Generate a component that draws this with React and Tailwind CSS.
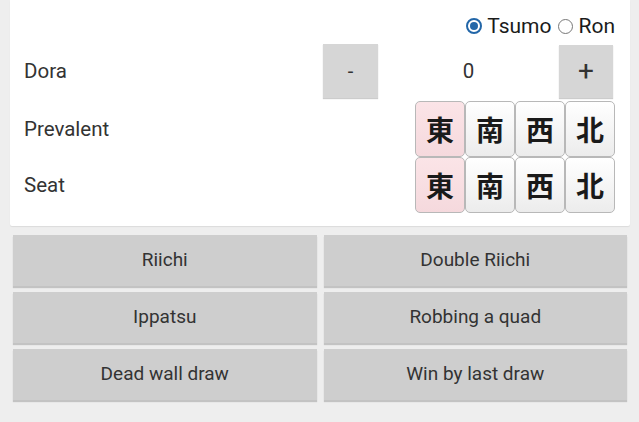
import React, { useState } from 'react';

const WINDS = ['東', '南', '西', '北'];

function Radio({ checked, label, onClick }) {
  return (
    <button onClick={onClick} className="flex items-center gap-[5px] outline-none">
      {checked ? (
        <span className="w-[16px] h-[16px] rounded-full border-[2px] border-[#2266a8] flex items-center justify-center">
          <span className="w-[8px] h-[8px] rounded-full bg-[#2266a8]" />
        </span>
      ) : (
        <span className="w-[15px] h-[15px] rounded-full border border-[#777]" />
      )}
      <span className="text-[21px] text-[#1b1b1b] leading-none">{label}</span>
    </button>
  );
}

function TileRow({ label, value, onPick }) {
  return (
    <div className="flex items-center h-[56px]">
      <div className="w-[391px] text-[20.5px] text-[#333]">{label}</div>
      <div className="flex">
        {WINDS.map((w, i) => (
          <button
            key={w}
            onClick={() => onPick(i)}
            className={`w-[50px] h-[56px] rounded-[5px] border border-[#b8b8b8] flex items-center justify-center 
                        ${value === i ? 'bg-gradient-to-b from-[#fbe4e7] to-[#f5d9dd]' : 'bg-gradient-to-b from-white to-[#ececec]'}`}
          >
            <span className="text-[28px] font-bold text-[#1a1a1a] leading-none" style={{ fontFamily: '"Noto Sans CJK JP", sans-serif' }}>
              {w}
            </span>
          </button>
        ))}
      </div>
    </div>
  );
}

export default function App() {
  const [tsumo, setTsumo] = useState(true);
  const [dora, setDora] = useState(0);
  const [prevalent, setPrevalent] = useState(0);
  const [seat, setSeat] = useState(0);

  const yaku = ['Riichi', 'Double Riichi', 'Ippatsu', 'Robbing a quad', 'Dead wall draw', 'Win by last draw'];

  return (
    <div className="w-[639px] h-[422px] bg-[#eeeeee] overflow-hidden" style={{ fontFamily: 'Roboto, "Liberation Sans", sans-serif' }}>
      {/* TOP CARD */}
      <div className="ml-[10px] w-[620px] bg-white rounded-b-[2px] shadow-[0_1px_1px_rgba(0,0,0,0.08)] pl-[14px] pb-[13px]">
        <div className="h-[44px] pt-[8px] flex items-center justify-end gap-[7px] pr-[15px]">
          <Radio checked={tsumo} label="Tsumo" onClick={() => setTsumo(true)} />
          <Radio checked={!tsumo} label="Ron" onClick={() => setTsumo(false)} />
        </div>

        <div className="flex items-center h-[54px]">
          <div className="w-[299px] text-[20.5px] text-[#333]">Dora</div>
          <button
            onClick={() => setDora(Math.max(0, dora - 1))}
            className="w-[55px] h-[54px] bg-[#d6d6d6] shadow-[0_1px_1px_rgba(0,0,0,0.2)] text-[20px] text-[#333] flex items-center justify-center"
          >
            -
          </button>
          <div className="w-[181px] text-center text-[20.5px] text-[#333]">{dora}</div>
          <button
            onClick={() => setDora(dora + 1)}
            className="w-[54px] h-[53px] bg-[#d6d6d6] shadow-[0_1px_1px_rgba(0,0,0,0.2)] text-[28px] text-[#333] flex items-center justify-center"
          >
            +
          </button>
        </div>

        <div className="mt-[3px]">
          <TileRow label="Prevalent" value={prevalent} onPick={setPrevalent} />
          <TileRow label="Seat" value={seat} onPick={setSeat} />
        </div>
      </div>

      {/* YAKU BUTTONS */}
      <div className="pl-[13px] pr-[12px] pt-[9px] grid grid-cols-2 gap-x-[7px] gap-y-[6px]">
        {yaku.map((y) => (
          <button
            key={y}
            className="h-[51px] bg-[#cecece] shadow-[0_2px_1px_rgba(0,0,0,0.18)] text-[19px] text-[#333] flex items-center justify-center"
          >
            {y}
          </button>
        ))}
      </div>
    </div>
  );
}
